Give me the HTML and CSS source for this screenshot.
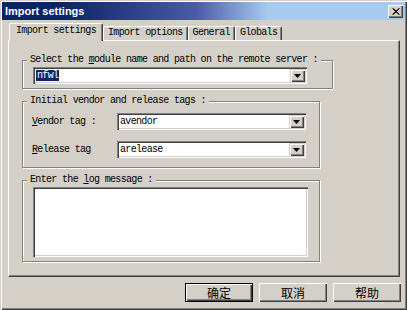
FILE: index.html
```html
<!DOCTYPE html>
<html lang="en">
<head>
    <meta charset="UTF-8">
    <title>Import settings</title>
    <link rel="stylesheet" href="styles.css">
</head>
<body>
    <div class="window">
        <div class="titlebar">
            <span class="title">Import settings</span>
            <span class="close">
                <svg width="8" height="7" viewBox="0 0 8 7">
                    <path d="M0.5 0.5 L7 6.5 M1.5 0.5 L7.5 6.5 M7 0.5 L0.5 6.5 M7.5 0.5 L1.5 6.5" stroke="#000" stroke-width="1" fill="none"/>
                </svg>
            </span>
        </div>

        <div class="tabs">
            <div class="tab active">Import settings</div>
            <div class="tab">Import options</div>
            <div class="tab">General</div>
            <div class="tab">Globals</div>
        </div>

        <div class="panel">
            <fieldset class="group">
                <legend>Select the <u>m</u>odule name and path on the remote server :</legend>
                <div class="combo wide">
                    <span class="value"><span class="selected">nfwl</span></span>
                    <span class="arrow"><svg width="7" height="4" viewBox="0 0 7 4"><path d="M0 0 H7 L3.5 4 Z" fill="#000"/></svg></span>
                </div>
            </fieldset>

            <fieldset class="group tags">
                <legend>Initial vendor and release tags :</legend>
                <div class="row">
                    <label><u>V</u>endor tag :</label>
                    <div class="combo">
                        <span class="value">avendor</span>
                        <span class="arrow"><svg width="7" height="4" viewBox="0 0 7 4"><path d="M0 0 H7 L3.5 4 Z" fill="#000"/></svg></span>
                    </div>
                </div>
                <div class="row">
                    <label><u>R</u>elease tag</label>
                    <div class="combo">
                        <span class="value">arelease</span>
                        <span class="arrow"><svg width="7" height="4" viewBox="0 0 7 4"><path d="M0 0 H7 L3.5 4 Z" fill="#000"/></svg></span>
                    </div>
                </div>
            </fieldset>

            <fieldset class="group">
                <legend>Enter the <u>l</u>og message :</legend>
                <div class="memo"></div>
            </fieldset>
        </div>

        <div class="buttons">
            <button class="button default">确定</button>
            <button class="button">取消</button>
            <button class="button">帮助</button>
        </div>
    </div>
</body>
</html>
```

FILE: styles.css
```css
* {
    margin: 0;
    padding: 0;
    box-sizing: border-box;
}

body {
    background-color: #d4d0c8;
    font-family: 'Liberation Mono', 'DejaVu Sans Mono', monospace;
    font-size: 10px;
    color: #000;
}

.window {
    width: 407px;
    height: 310px;
    padding: 2px;
    background: #d4d0c8;
    display: flex;
    flex-direction: column;
    box-shadow: inset 1px 1px 0 #d4d0c8, inset 2px 2px 0 #fff,
                inset -1px -1px 0 #404040, inset -2px -2px 0 #808080;
}

.titlebar {
    height: 18px;
    padding: 0 2px 0 3px;
    display: flex;
    align-items: center;
    justify-content: space-between;
    background: linear-gradient(to right, #0a246a 15%, #4a5aa8 48%, #a6caf0 66%);
    color: #fff;
    font: bold 11px 'Liberation Sans', Arial, sans-serif;
}

.close {
    width: 15px;
    height: 13px;
    display: flex;
    align-items: center;
    justify-content: center;
    background: #d4d0c8;
    box-shadow: inset 1px 1px 0 #fff, inset -1px -1px 0 #404040, inset -2px -2px 0 #808080;
}

.tabs {
    height: 17px;
    margin: 3px 0 0 7px;
    display: flex;
    align-items: flex-end;
}

.tab {
    height: 14px;
    padding: 0 4px;
    line-height: 12px;
    letter-spacing: -0.67px;
    border-top: 1px solid #fff;
    border-left: 1px solid #fff;
    border-right: 1px solid #404040;
    border-radius: 2px 2px 0 0;
    box-shadow: inset -1px 0 0 #808080;
    white-space: nowrap;
}

.tab.active {
    height: 18px;
    padding: 0 6px;
    line-height: 13px;
    margin-bottom: -1px;
    position: relative;
    z-index: 1;
    background: #d4d0c8;
}

.panel {
    width: 392px;
    height: 237px;
    margin-left: 6px;
    padding: 13px 0 0 13px;
    display: flex;
    flex-direction: column;
    border-top: 1px solid #fff;
    border-left: 1px solid #fff;
    border-right: 1px solid #404040;
    border-bottom: 1px solid #404040;
    box-shadow: inset -1px -1px 0 #808080;
}

.group {
    width: 298px;
    padding: 1px 11px 4px 10px;
    border: 1px solid #808080;
    box-shadow: inset 1px 1px 0 #fff, 1px 1px 0 #fff;
}

.group + .group {
    margin-top: 6px;
}

.group legend {
    margin-left: -6px;
    padding: 0 3px;
    line-height: 12px;
    letter-spacing: -0.67px;
    background: #d4d0c8;
    white-space: nowrap;
}

.group.tags {
    padding-top: 6px;
    padding-bottom: 9px;
}

.row {
    display: flex;
    align-items: center;
}

.row + .row {
    margin-top: 11px;
}

.row label {
    width: 85px;
    margin-left: -1px;
    letter-spacing: -0.67px;
    white-space: nowrap;
}

.combo {
    width: 189px;
    height: 17px;
    padding: 2px;
    display: flex;
    background: #fff;
    box-shadow: inset 1px 1px 0 #808080, inset 2px 2px 0 #404040,
                inset -1px -1px 0 #fff, inset -2px -2px 0 #d4d0c8;
}

.combo.wide {
    width: 274px;
}

.value {
    flex: 1;
    padding-left: 1px;
    line-height: 13px;
    letter-spacing: -0.67px;
}

.selected {
    background: #0a246a;
    color: #fff;
    padding: 0 1px;
}

.arrow {
    width: 15px;
    height: 13px;
    display: flex;
    align-items: center;
    justify-content: center;
    background: #d4d0c8;
    box-shadow: inset 1px 1px 0 #d4d0c8, inset 2px 2px 0 #fff,
                inset -1px -1px 0 #404040, inset -2px -2px 0 #808080;
}

.memo {
    width: 275px;
    height: 70px;
    background: #fff;
    box-shadow: inset 1px 1px 0 #808080, inset 2px 2px 0 #404040,
                inset -1px -1px 0 #fff, inset -2px -2px 0 #d4d0c8;
}

.buttons {
    margin-top: 6px;
    padding-right: 4px;
    display: flex;
    justify-content: flex-end;
    gap: 6px;
}

.button {
    width: 68px;
    height: 19px;
    border: none;
    background: #d4d0c8;
    font: 12px 'Noto Sans CJK SC', 'Liberation Sans', sans-serif;
    line-height: 17px;
    color: #000;
    box-shadow: inset 1px 1px 0 #fff, inset -1px -1px 0 #404040, inset -2px -2px 0 #808080;
}

.button.default {
    border: 1px solid #000;
}
```
